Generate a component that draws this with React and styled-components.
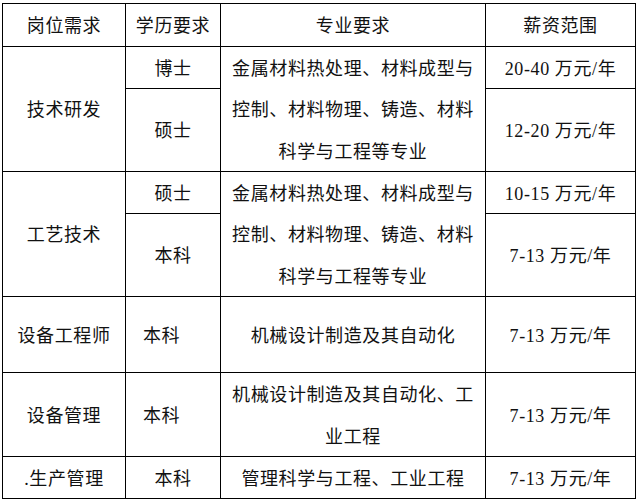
import React from 'react';
import styled, { createGlobalStyle } from 'styled-components';

const Global = createGlobalStyle`
  html, body { margin: 0; padding: 0; background: #fff; }
  body { font-family: "Liberation Serif", "Noto Sans CJK SC", serif; color: #111; }
`;

const Page = styled.div`
  padding: 3px 0 0 2px;
`;

const Grid = styled.div`
  display: grid;
  width: 634px;
  box-sizing: border-box;
  grid-template-columns: 122px 94px 264px 149px;
  grid-template-rows: 42px 41px 82px 41px 82px 75px 83px 41px;
  gap: 1px;
  padding: 1px;
  background: #000;
`;

const Cell = styled.div`
  background: #fff;
  display: flex;
  align-items: center;
  justify-content: ${p => (p.$left ? 'flex-start' : 'center')};
  padding-left: ${p => (p.$left ? '17px' : '0')};
  padding-top: 4px;
  box-sizing: border-box;
  text-align: center;
  font-size: 18px;
  letter-spacing: 0.6px;
  line-height: 41.5px;
  grid-row: ${p => (p.$span ? `span ${p.$span}` : 'auto')};
  overflow: hidden;
`;

const Text = styled.div`
  width: 100%;
  padding: 0 ${p => (p.$pad ? p.$pad : 0)}px;
  box-sizing: border-box;
`;

const major = '金属材料热处理、材料成型与控制、材料物理、铸造、材料科学与工程等专业';

export default function App() {
  return (
    <Page>
      <Global />
      <Grid>
        <Cell>岗位需求</Cell>
        <Cell>学历要求</Cell>
        <Cell>专业要求</Cell>
        <Cell>薪资范围</Cell>

        <Cell $span={2}>技术研发</Cell>
        <Cell>博士</Cell>
        <Cell $span={2}><Text $pad={8}>{major}</Text></Cell>
        <Cell>20-40 万元/年</Cell>
        <Cell>硕士</Cell>
        <Cell>12-20 万元/年</Cell>

        <Cell $span={2}>工艺技术</Cell>
        <Cell>硕士</Cell>
        <Cell $span={2}><Text $pad={8}>{major}</Text></Cell>
        <Cell>10-15 万元/年</Cell>
        <Cell>本科</Cell>
        <Cell>7-13 万元/年</Cell>

        <Cell>设备工程师</Cell>
        <Cell $left>本科</Cell>
        <Cell>机械设计制造及其自动化</Cell>
        <Cell>7-13 万元/年</Cell>

        <Cell>设备管理</Cell>
        <Cell $left>本科</Cell>
        <Cell><Text $pad={8}>机械设计制造及其自动化、工业工程</Text></Cell>
        <Cell>7-13 万元/年</Cell>

        <Cell>.生产管理</Cell>
        <Cell>本科</Cell>
        <Cell>管理科学与工程、工业工程</Cell>
        <Cell>7-13 万元/年</Cell>
      </Grid>
    </Page>
  );
}
